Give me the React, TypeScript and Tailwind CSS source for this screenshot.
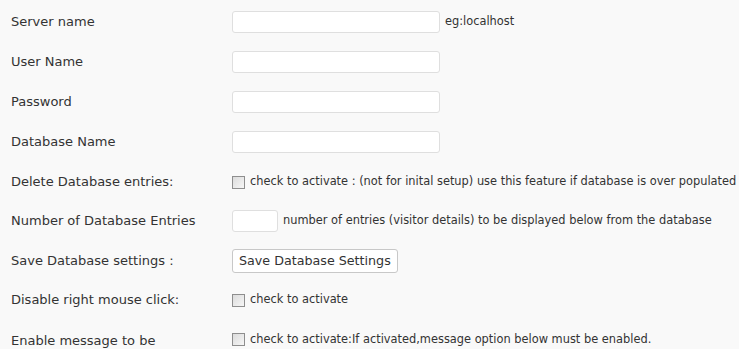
const label = "w-[221px] shrink-0 text-[13px] text-[#333]";
const note = "text-[11.4px] text-[#333]";

function Box() {
  return (
    <input
      type="checkbox"
      className="appearance-none w-[13px] h-[13px] shrink-0 border border-[#8e8e8e] bg-gradient-to-br from-[#dcdcdc] to-[#f6f6f6] m-0"
    />
  );
}

function Field({ w = "w-[208px]" }: { w?: string }) {
  return <input type="text" className={`${w} h-[22px] bg-white border border-[#dfdfdf] rounded-[3px] outline-none`} />;
}

export default function App() {
  return (
    <div className="w-[739px] h-[349px] overflow-hidden bg-[#f9f9f9] pl-[11px] pt-[2px]" style={{ fontFamily: '"DejaVu Sans", Verdana, sans-serif' }}>
      <div className="flex items-center h-[40px]">
        <span className={label}>Server name</span>
        <Field />
        <span className={`${note} ml-[5px]`}>eg:localhost</span>
      </div>
      <div className="flex items-center h-[40px]">
        <span className={label}>User Name</span>
        <Field />
      </div>
      <div className="flex items-center h-[40px]">
        <span className={label}>Password</span>
        <Field />
      </div>
      <div className="flex items-center h-[40px]">
        <span className={label}>Database Name</span>
        <Field />
      </div>
      <div className="flex items-center h-[40px]">
        <span className={label}>Delete Database entries:</span>
        <Box />
        <span className={`${note} ml-[5px] whitespace-nowrap`}>check to activate : (not for inital setup) use this feature if database is over populated</span>
      </div>
      <div className="flex items-center h-[38px]">
        <span className={label}>Number of Database Entries</span>
        <Field w="w-[46px]" />
        <span className={`${note} ml-[5px]`}>number of entries (visitor details) to be displayed below from the database</span>
      </div>
      <div className="flex items-center h-[41px]">
        <span className={label}>Save Database settings :</span>
        <button className="h-[24px] px-[6px] bg-white border border-[#c8c8c8] rounded-[3px] text-[12.7px] text-[#333]">
          Save Database Settings
        </button>
      </div>
      <div className="flex items-center h-[38px]">
        <span className={label}>Disable right mouse click:</span>
        <Box />
        <span className={`${note} ml-[5px]`}>check to activate</span>
      </div>
      <div className="flex items-start pt-[12px]">
        <span className={label}>Enable message to be</span>
        <div className="flex flex-col gap-[3px]">
          <div className="flex items-center">
            <Box />
            <span className={`${note} ml-[5px]`}>check to activate:If activated,message option below must be enabled.</span>
          </div>
          <Field />
        </div>
      </div>
    </div>
  );
}
